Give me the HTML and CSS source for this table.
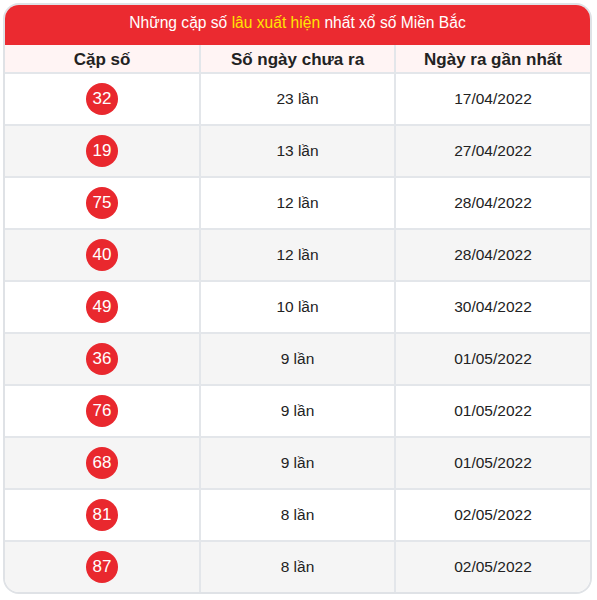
FILE: index.html
```html
<!DOCTYPE html>
<html lang="vi">
<head>
<meta charset="utf-8">
<title>Lâu xuất hiện</title>
<link rel="stylesheet" href="styles.css">
</head>
<body>
<div class="box">
  <div class="title">Những cặp số <span class="hl">lâu xuất hiện</span> nhất xổ số Miền Bắc</div>
  <table class="tbl">
    <thead>
      <tr><th>Cặp số</th><th>Số ngày chưa ra</th><th>Ngày ra gần nhất</th></tr>
    </thead>
    <tbody>
      <tr><td><span class="ball">32</span></td><td>23 lần</td><td>17/04/2022</td></tr>
      <tr><td><span class="ball">19</span></td><td>13 lần</td><td>27/04/2022</td></tr>
      <tr><td><span class="ball">75</span></td><td>12 lần</td><td>28/04/2022</td></tr>
      <tr><td><span class="ball">40</span></td><td>12 lần</td><td>28/04/2022</td></tr>
      <tr><td><span class="ball">49</span></td><td>10 lần</td><td>30/04/2022</td></tr>
      <tr><td><span class="ball">36</span></td><td>9 lần</td><td>01/05/2022</td></tr>
      <tr><td><span class="ball">76</span></td><td>9 lần</td><td>01/05/2022</td></tr>
      <tr><td><span class="ball">68</span></td><td>9 lần</td><td>01/05/2022</td></tr>
      <tr><td><span class="ball">81</span></td><td>8 lần</td><td>02/05/2022</td></tr>
      <tr><td><span class="ball">87</span></td><td>8 lần</td><td>02/05/2022</td></tr>
    </tbody>
  </table>
</div>
</body>
</html>
```
FILE: styles.css
```css
html, body {
  margin: 0;
  padding: 0;
  background: #fff;
}
body {
  font-family: "Liberation Sans", Arial, sans-serif;
  color: #222;
}
.box {
  margin: 3px;
  width: 589px;
  box-sizing: border-box;
  border: 2px solid #dfe2e6;
  border-radius: 16px;
  overflow: hidden;
}
.title {
  height: 40px;
  line-height: 36px;
  background: #eb2a30;
  color: #fff;
  font-size: 15.6px;
  text-align: center;
}
.hl {
  color: #ffe500;
}
.tbl {
  width: 100%;
  border-collapse: collapse;
  table-layout: fixed;
}
.tbl th, .tbl td {
  text-align: center;
  padding: 0;
  border-left: 2px solid #e3e6ea;
  border-bottom: 2px solid #e3e6ea;
}
.tbl th:first-child, .tbl td:first-child {
  border-left: none;
}
.tbl tbody tr:last-child td {
  border-bottom: none;
}
.tbl th {
  height: 25px;
  padding-top: 2px;
  background: #fff4f4;
  font-size: 17px;
  font-weight: bold;
  color: #222;
}
.tbl td {
  height: 50px;
  font-size: 15.5px;
  color: #222;
}
.tbl tbody tr:nth-child(even) td {
  background: #f5f5f5;
}
.ball {
  display: inline-flex;
  align-items: center;
  justify-content: center;
  width: 32px;
  height: 32px;
  border-radius: 50%;
  background: #e9282e;
  color: #fff;
  font-size: 17px;
  vertical-align: middle;
}
```
